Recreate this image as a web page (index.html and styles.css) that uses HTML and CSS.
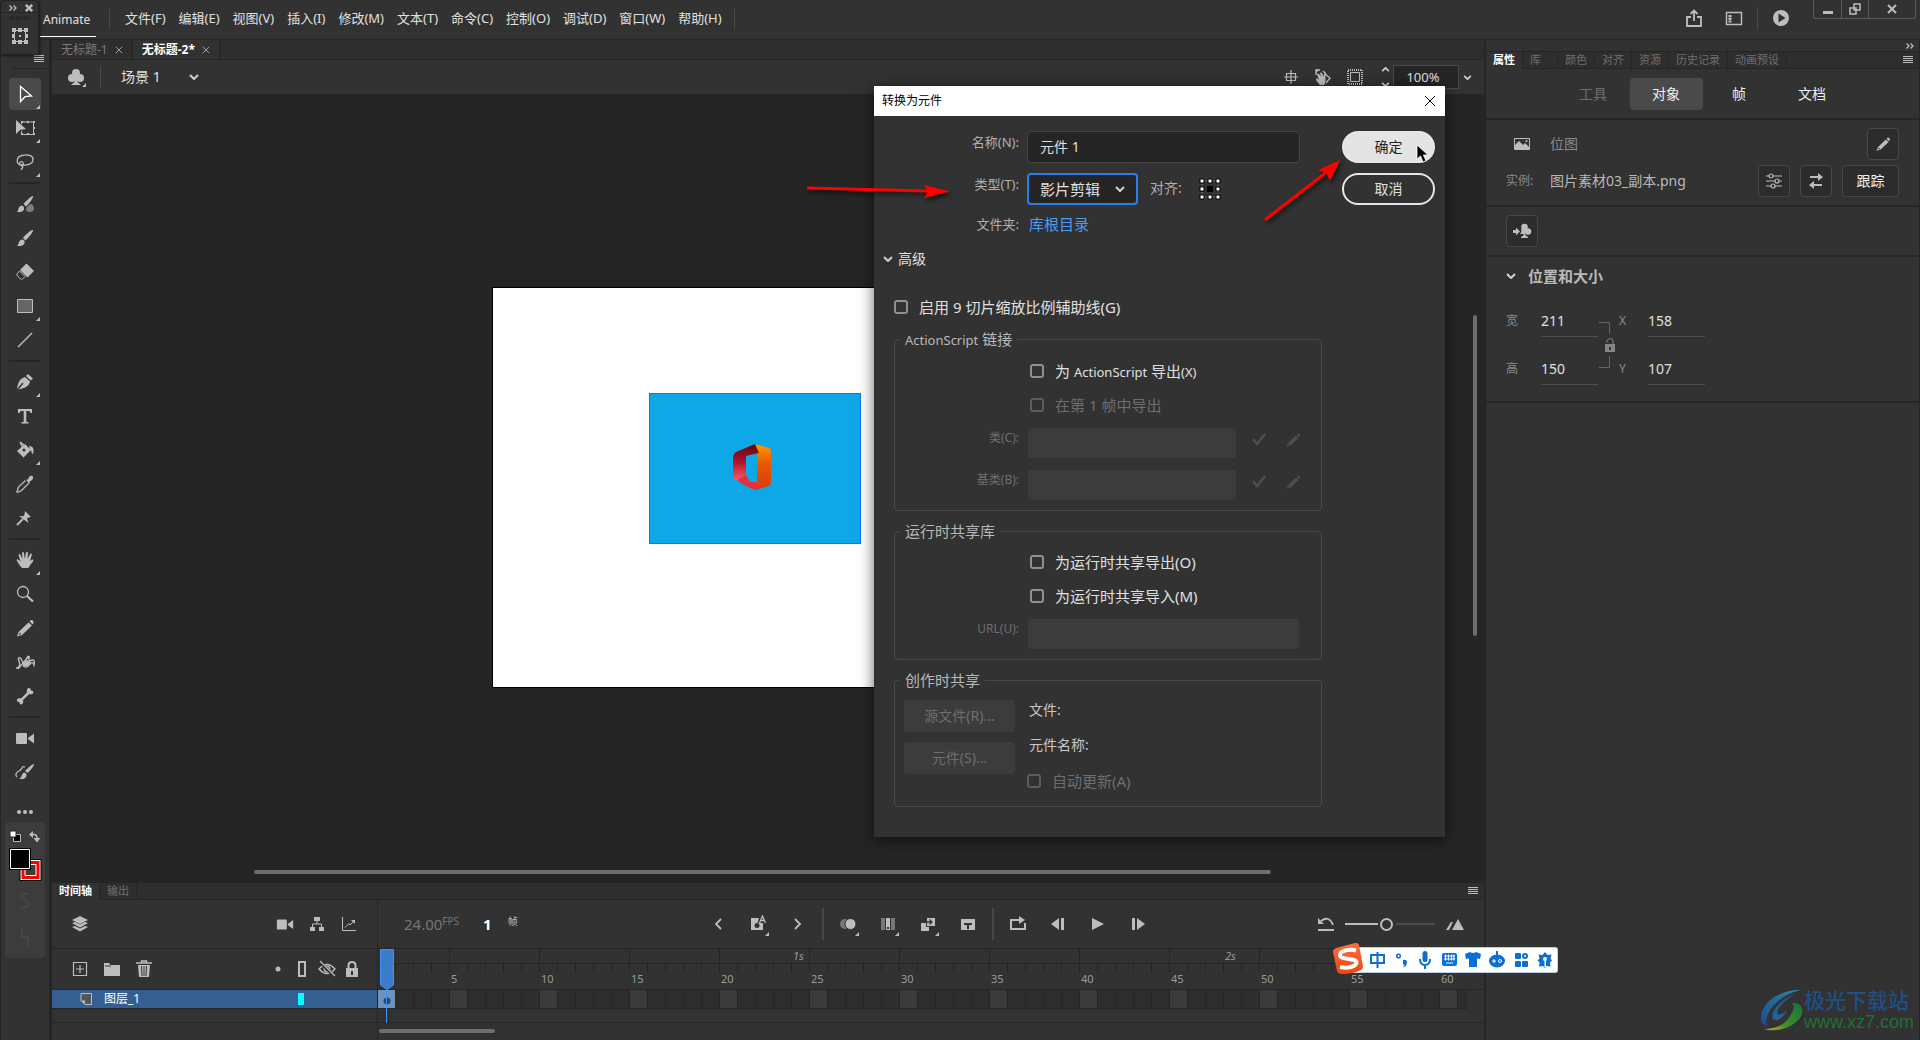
FILE: index.html
```html
<!DOCTYPE html>
<html lang="zh-CN">
<head>
<meta charset="utf-8">
<title>Animate</title>
<link rel="stylesheet" href="styles.css">
</head>
<body>
<svg class="sprite" aria-hidden="true">
  <symbol id="transform" viewBox="0 0 16 16"><path d="M2.500 2.500h11v11h-11z" fill="none" stroke="currentColor"/><path d="M0 0h4v4H0zM6 0h4v4H6zM12 0h4v4h-4zM0 6h3v4H0zM13 6h3v4h-3zM0 12h4v4H0zM6 12h4v4H6zM12 12h4v4h-4zM7 7h2v2H7z" fill="currentColor"/></symbol>
  <symbol id="more2" viewBox="0 0 8 6"><path d="M.5.500 3 3 .5 5.500M4.500.500 7 3 4.500 5.500" fill="none" stroke="currentColor" stroke-width="1.300"/></symbol>
  <symbol id="burger" viewBox="0 0 10 8"><path d="M0 .5h10M0 2.500h10M0 4.500h10M0 6.500h10" stroke="currentColor"/></symbol>
  <symbol id="x" viewBox="0 0 10 10"><path d="m1 1 8 8M9 1 1 9" stroke="currentColor" fill="none"/></symbol>
  <symbol id="down" viewBox="0 0 10 6"><path d="m1 1 4 4 4-4" fill="none" stroke="currentColor" stroke-width="2"/></symbol>
  <symbol id="club" viewBox="0 0 18 18"><circle cx="9" cy="5" r="4" fill="currentColor"/><circle cx="5" cy="10" r="4" fill="currentColor"/><circle cx="13" cy="10" r="4" fill="currentColor"/><path d="M8 7h2v5q.3 3 3.500 4v1h-9v-1Q7.700 15 8 12z" fill="currentColor"/></symbol>
  <symbol id="select" viewBox="0 0 20 20"><path d="M5.500 2.500v15l4.500-4.800 6.500-.7z" fill="none" stroke="#fff" stroke-width="1.300"/></symbol>
  <symbol id="subselect" viewBox="0 0 20 20"><path d="M1 2v14l4-4 6-1z" fill="currentColor"/><path d="M7 4h11.500v12.500H6.500V13M6.500 6V4" fill="none" stroke="currentColor"/><path d="M6 3h2v2H6zM12 3h2v2h-2zM18 3h2v2h-2zM18 9h2v2h-2zM18 15h2v2h-2zM12 15h2v2h-2zM6 15h2v2H6z" fill="currentColor"/></symbol>
  <symbol id="lasso" viewBox="0 0 20 20"><path d="M5 13C1 11 1 5 7 3.500c6-1.500 11 0 11 4 0 5-7 6.500-12 5.200M5.500 13.500a2 2 0 1 0-.1-3.500c-2 1-.5 4 1.600 3.500 2 1-.2 3-1 4.500" fill="none" stroke="currentColor" stroke-width="1.300"/></symbol>
  <symbol id="fluid" viewBox="0 0 20 20"><path d="M18 2c1 1-4 8-7 10.500L8.500 10C11 7 16 2 18 2zM2 18c1.500-1 1-5.500 4.500-6.500 2 .3 3 2 2.500 4-1 3-4.500 2.500-7 2.500z" fill="currentColor"/><path d="M15 10c2.500 0 4 2 4 4.500S17 18 14.500 18 11 16.500 11 15c0-2.500 3-3 4-5z" fill="currentColor" opacity=".55"/></symbol>
  <symbol id="brush" viewBox="0 0 20 20"><path d="M18 2c1 1-4.500 8-7.500 10.500L8 10C10.500 7 16 1.500 18 2zM2 18c2-1 1-5.500 5-6.500 2 .3 3.300 2 2.500 4-1.500 3-5 2.500-7.500 2.500z" fill="currentColor"/></symbol>
  <symbol id="eraser" viewBox="0 0 20 20"><path d="M11.500 1.500 19 9l-6.500 6.500L5 8z" fill="currentColor"/><path d="M4.500 9 2 12q-.5 1 .5 2l3 3q1 .8 2 0l2.500-2.500z" fill="none" stroke="currentColor"/></symbol>
  <symbol id="rect" viewBox="0 0 20 20"><path d="M2.500 3.500h15v13h-15z" fill="#666" stroke="currentColor"/></symbol>
  <symbol id="line" viewBox="0 0 20 20"><path d="M3 17 17 3" stroke="currentColor" stroke-width="1.400"/></symbol>
  <symbol id="pen" viewBox="0 0 20 20"><path d="m13 2 5 4.500-2.300 2L11 4zM10 5l5 4.500c-1 5-5 6.500-11.500 8l5-6-1-1-5.500 6.500C3 11 4.500 6.500 10 5z" fill="currentColor"/></symbol>
  <symbol id="type" viewBox="0 0 20 20"><path d="M3 3h14v4h-1.600q0-2-1.900-2h-2.200v11h2.200v1.500h-7V16h2.200V5H6.500Q4.600 5 4.600 7H3z" fill="currentColor"/></symbol>
  <symbol id="bucket" viewBox="0 0 20 20"><path d="m10 4 6 6-7.500 7.500L2 11zM14 6c5 0 5 4 4 8-2-.5-1-4-3-5z" fill="currentColor"/><path d="m5 2 4 8M5 2l4 3" stroke="currentColor" stroke-width="1.500"/><circle cx="9" cy="10" r="1.500" fill="#323232"/></symbol>
  <symbol id="dropper" viewBox="0 0 20 20"><path d="M11 5.500c1 0 1.500.3 2 0 .5-3.500 3-4.500 4.500-3.500 1.500 2 0 4.500-3 5.500.3 1 .5 1.500-.5 2.500z" fill="currentColor"/><path d="M10.500 6.500 3.500 13q-.8 2.500-1.500 5 2.500 0 4.500-1.500l7-7" fill="none" stroke="currentColor" stroke-width="1.300"/></symbol>
  <symbol id="pin" viewBox="0 0 20 20"><path d="m10 3 6 6q-3 0-4 1.500L13.500 15 4 8l4.500.2Q10 6 10 3z" fill="currentColor"/><path d="m2 17 6-6" stroke="currentColor" stroke-width="1.800"/></symbol>
  <symbol id="hand" viewBox="0 0 20 20"><path d="M7 18C5 16 2.500 12 1.500 10c0-1.500 1.500-1 4 1.500L3.500 5c0-1.300 1.500-1.500 2 0L7.500 9 7 3c.2-1.300 1.600-1.300 2 0l.8 6L11 2.500c.5-1.200 1.900-.8 2 .5L12.500 9l2.600-5c.8-1 2-.3 1.700 1L15 11c1.500-1.500 3-2 3.500-1-1 3-3 4-4 6-.5 1.500-1 2-2 2z" fill="currentColor"/></symbol>
  <symbol id="zoom" viewBox="0 0 20 20"><circle cx="8" cy="8" r="5.500" fill="none" stroke="currentColor" stroke-width="1.300"/><path d="m12 12 6 5.500" stroke="currentColor" stroke-width="2.200"/></symbol>
  <symbol id="pencil" viewBox="0 0 20 20"><path d="m13.500 4.500 3.500 3L7 17l-5 1.500L3.500 14zM14.500 3.300 16 2q3 .3 2.500 3l-1 1.500z" fill="currentColor"/><path d="M5 14.500 3.500 17l2.700-1z" fill="#323232"/></symbol>
  <symbol id="warp" viewBox="0 0 20 20"><path d="M1 16C5 16 5 12 4 9 2 4 6 5 7 9c1 2 3 2 4-1 1-4 3-4 3 0 0 2 2 0 3.500 0 2.500 0 2 3 1.500 5-1-3-2.500-3-4-1-2 3-4 4-7 2M3 17l10-12" fill="none" stroke="currentColor" stroke-width="1.400"/><path d="M7 10q3 2 5-2l4 2q-2 5-8 4z" fill="currentColor"/><circle cx="13.500" cy="5" r="1.500" fill="currentColor"/></symbol>
  <symbol id="bone" viewBox="0 0 20 20"><path d="M14 2q2 0 2 2.500 2.500 0 2.500 2c-1 2.500-3 1.800-4.200 1.500L8 14c.4 2 .2 4-1.500 4.500-2 0-2-1-2-2.500-2.500 0-2.800-1.500-2.500-2.300 1-2 2.800-1.500 4-1.200l6-6C11.500 4.500 12 2 14 2z" fill="currentColor"/></symbol>
  <symbol id="camera" viewBox="0 0 20 20"><rect x="1" y="5" width="11" height="11" rx="1" fill="currentColor"/><path d="m13 10 6-4.500v10L13 11z" fill="currentColor"/></symbol>
  <symbol id="assetbrush" viewBox="0 0 20 20"><path d="M19 2c.5 1.500-4 7-6.500 9L10 9c3-3 7-7 9-7zM4 17c3-1 2-5 5-6.500 2 .3 3 1.800 2.500 3.500-1.500 4-5 3-7.500 3z" fill="currentColor"/><path d="M10 5C7 3 7 8 4 9s-4 4-2 6" fill="none" stroke="currentColor" stroke-width="1.300"/></symbol>
  <symbol id="dots" viewBox="0 0 20 20"><circle cx="4" cy="10" r="2" fill="currentColor"/><circle cx="10" cy="10" r="2" fill="currentColor"/><circle cx="16" cy="10" r="2" fill="currentColor"/></symbol>
  <symbol id="layers" viewBox="0 0 18 18"><path d="m9 1 8 4-8 4-8-4zM1 8l3-1 5 2.500L14 7l3 1-8 4.500zM1 12l3-1 5 2.500 5-2.500 3 1-8 4.500z" fill="currentColor"/></symbol>
  <symbol id="tree" viewBox="0 0 16 16"><path d="M5 1h6v4H5zM1 11h5v4H1zM10 11h5v4h-5z" fill="currentColor"/><path d="M8 5v3M3.500 11V8h9v3" fill="none" stroke="currentColor"/></symbol>
  <symbol id="graph" viewBox="0 0 16 16"><path d="M1.500 1v13.500H15M4 11.500l4-4L9 9l4-4" fill="none" stroke="currentColor"/><path d="M10 4h4v4z" fill="currentColor"/></symbol>
  <symbol id="share" viewBox="0 0 18 18"><path d="M6 8H2v9h14V8h-4M9 12V2M5.500 5 9 1.500 12.500 5" fill="none" stroke="currentColor" stroke-width="1.800"/></symbol>
  <symbol id="layout" viewBox="0 0 18 18"><path d="M1.500 3.500h15v12h-15z" fill="none" stroke="currentColor" stroke-width="1.400"/><path d="M3.500 6h3v2.200h-3zM3.500 8.800h3V11h-3zM3.500 11.600h3v2h-3z" fill="currentColor"/></symbol>
  <symbol id="playround" viewBox="0 0 18 18"><circle cx="9" cy="9" r="8" fill="currentColor"/><path d="m6.500 4.500 7 4.500-7 4.500z" fill="#323232"/></symbol>
  <symbol id="cross" viewBox="0 0 16 16"><path d="M8 1v14M1 8h14M3.500 4.500h9v7h-9z" fill="none" stroke="currentColor" stroke-width="1.200"/></symbol>
  <symbol id="clip" viewBox="0 0 16 16"><path d="M1 1h14v14H1z" fill="none" stroke="currentColor" stroke-width="2" stroke-dasharray="1 1"/><path d="M3.500 3.500h9v9h-9z" fill="none" stroke="currentColor"/></symbol>
  <symbol id="rotate" viewBox="0 0 18 18"><path d="M6 17c-2-2-4-4-4-6 1-1 2 0 3 1L3 6q1-1 2 0l2 3-1-4q1-1 2 0l1.500 4L10 6q1-1 1.500.5L11.500 12c0 3-1 5-2 5z" fill="currentColor"/><path d="M2 7V2h4M4 2l-2 2M11 6l5 4-4 5M9 3l3 3" fill="none" stroke="currentColor" stroke-width="1.400"/></symbol>
  <symbol id="image" viewBox="0 0 16 12"><path d="M.5.500h15v11H.5z" fill="none" stroke="currentColor"/><path d="M1 11V7l4-4 4 4 2-2 4 4v2z" fill="currentColor"/><circle cx="12.500" cy="3" r="1" fill="currentColor"/></symbol>
  <symbol id="sliders" viewBox="0 0 16 16"><path d="M0 3h3m4 0h9M0 8h9m4 0h3M0 13h5m4 0h7" stroke="currentColor"/><g fill="none" stroke="currentColor" stroke-width="1.200"><circle cx="5" cy="3" r="2"/><circle cx="11" cy="8" r="2"/><circle cx="7" cy="13" r="2"/></g></symbol>
  <symbol id="swap" viewBox="0 0 16 16"><path d="M2 4h9M5 12h9" stroke="currentColor" stroke-width="2"/><path d="m10 0 5 4-5 4zM6 8l-5 4 5 4z" fill="currentColor"/></symbol>
  <symbol id="toclub" viewBox="0 0 20 18"><circle cx="12.500" cy="5" r="3.300" fill="currentColor"/><circle cx="16" cy="9.500" r="3.300" fill="currentColor"/><path d="M12 5h1v7q.5 2 3 3v1H9v-1q2.500-1 3-3zM9 7l4 1-1 4H8l1.500-2.500zM1 8h3V5.500L8 9.500l-4 4V11H1z" fill="currentColor"/></symbol>
  <symbol id="lock" viewBox="0 0 16 18"><path d="M4.500 8V5.500q0-3.500 3.500-3.500t3.500 3.500V8" fill="none" stroke="currentColor" stroke-width="2"/><path d="M2 8h12v9H2z" fill="currentColor"/><path d="M7 11h2v4H7z" fill="#323232"/></symbol>
  <symbol id="unlock" viewBox="0 0 10 14"><path d="M2 4.500V3q1-2.500 3.500-2.500T8 3v3" fill="none" stroke="currentColor"/><path d="M0 6h10v8H0z" fill="currentColor"/><path d="M4 9h2v3H4z" fill="#323232"/></symbol>
  <symbol id="plus" viewBox="0 0 16 16"><path d="M1.500 1.500h13v13h-13zM8 4v8M4 8h8" fill="none" stroke="currentColor" stroke-width="1.200"/></symbol>
  <symbol id="folder" viewBox="0 0 16 16"><path d="M0 2h5l1.500 2H16v11H0z" fill="currentColor"/><path d="M1 5h6" stroke="#323232"/></symbol>
  <symbol id="trash" viewBox="0 0 16 18"><path d="M0 3h16M5.500 3V1h5v2" fill="none" stroke="currentColor" stroke-width="1.500"/><path d="M2 5h12l-1 12H3z" fill="currentColor"/><path d="m5.500 6 .5 10M8 6v10m2.500-10-.5 10" stroke="#323232"/></symbol>
  <symbol id="eye" viewBox="0 0 18 18"><path d="M1 9q8-9 16 0-8 9-16 0z" fill="none" stroke="currentColor" stroke-width="1.300"/><circle cx="9" cy="9" r="2.800" fill="none" stroke="currentColor" stroke-width="1.300"/><path d="m2 2 14 14" stroke="#323232" stroke-width="3"/><path d="m2 1 15 15" stroke="currentColor" stroke-width="1.300"/></symbol>
  <symbol id="bar" viewBox="0 0 16 18"><path d="M5 2h6v14H5z" fill="none" stroke="currentColor" stroke-width="2"/></symbol>
  <symbol id="dot" viewBox="0 0 16 16"><circle cx="8" cy="8" r="2.500" fill="currentColor"/></symbol>
  <symbol id="page" viewBox="0 0 12 12"><path d="M1 .5h10.500v11H5L1 7.500z" fill="#555" stroke="currentColor"/><path d="M1 7.500h4v4z" fill="currentColor"/></symbol>
  <symbol id="prevkf" viewBox="0 0 18 18"><path d="m12 4-5 5 5 5" fill="none" stroke="currentColor" stroke-width="1.800"/></symbol>
  <symbol id="nextkf" viewBox="0 0 18 18"><path d="m6 4 5 5-5 5" fill="none" stroke="currentColor" stroke-width="1.800"/></symbol>
  <symbol id="autokf" viewBox="0 0 18 18"><path d="M2 3h8L8.500 8H14v7H2z" fill="currentColor"/><circle cx="8" cy="10.500" r="2.500" fill="#323232"/><path d="m10.500 8 3-7 3 7m-5-2.500h4" fill="none" stroke="currentColor" stroke-width="1.300"/></symbol>
  <symbol id="onion" viewBox="0 0 18 18"><circle cx="6" cy="9" r="5" fill="#777"/><circle cx="11.500" cy="9" r="5.500" fill="currentColor" stroke="#323232"/></symbol>
  <symbol id="multi" viewBox="0 0 18 18"><path d="M2 3h4v12H2zM12 3h4v12h-4z" fill="#777"/><path d="M7 3h4v12H7z" fill="currentColor"/><path d="M8 12h2v2H8z" fill="#323232"/></symbol>
  <symbol id="tween" viewBox="0 0 18 18"><path d="M2 8h8v8H2z" fill="currentColor"/><path d="M7.500 2.500h9v9h-9z" fill="currentColor" stroke="#323232"/><path d="M7 7h6m-2.500-2.500L13 7l-2.500 2.500" fill="none" stroke="#323232" stroke-width="1.300"/></symbol>
  <symbol id="slot" viewBox="0 0 18 18"><path d="M2 4h14v11H2z" fill="currentColor"/><path d="M5 8h8v2h-3v4H8v-4H5z" fill="#323232"/></symbol>
  <symbol id="loop" viewBox="0 0 18 18"><path d="M5 5H2v9h14V8M5 5h6" fill="none" stroke="currentColor" stroke-width="2"/><path d="m10 1 6 4-6 4z" fill="currentColor"/></symbol>
  <symbol id="stepback" viewBox="0 0 18 18"><path d="M10 3v12L2 9zM12 3h3v12h-3z" fill="currentColor"/></symbol>
  <symbol id="play" viewBox="0 0 18 18"><path d="M3 3v12l12-6z" fill="currentColor"/></symbol>
  <symbol id="stepfwd" viewBox="0 0 18 18"><path d="M8 3v12l8-6zM3 3h3v12H3z" fill="currentColor"/></symbol>
  <symbol id="reset" viewBox="0 0 18 18"><path d="M1 3v6h6zM1 14h16v2H1z" fill="currentColor"/><path d="M4 6q8-6 12 4" fill="none" stroke="currentColor" stroke-width="1.800"/></symbol>
  <symbol id="mounts" viewBox="0 0 20 16"><path d="m7 14 6-11 6 11zM1 14 6 6h2L4 14z" fill="currentColor"/></symbol>
  <symbol id="check" viewBox="0 0 14 14"><path d="m1 7 4 5 8-10" fill="none" stroke="currentColor" stroke-width="2.500"/></symbol>
</svg>

<div class="app">
  <header class="topbar">
    <a class="home" href="#">Animate</a>
    <nav class="menus">
      <a href="#">文件(F)</a><a href="#">编辑(E)</a><a href="#">视图(V)</a><a href="#">插入(I)</a><a href="#">修改(M)</a><a href="#">文本(T)</a><a href="#">命令(C)</a><a href="#">控制(O)</a><a href="#">调试(D)</a><a href="#">窗口(W)</a><a href="#">帮助(H)</a>
    </nav>
    <div class="top-actions">
      <button class="sharebtn" aria-label="共享"><svg class="i18"><use href="#share"/></svg></button>
      <button aria-label="工作区"><svg class="i18"><use href="#layout"/></svg></button>
      <span class="vline"></span>
      <button aria-label="测试影片"><svg class="i18"><use href="#playround"/></svg></button>
    </div>
    <div class="winctl">
      <button aria-label="最小化"><svg width="12" height="12"><path d="M1 8h10v3H1z" fill="currentColor"/></svg></button>
      <button aria-label="还原"><svg width="12" height="12"><path d="M5 1h6v6H5z M1 5h6v6H1z" fill="#323232" stroke="currentColor" stroke-width="1.500"/></svg></button>
      <button class="wide" aria-label="关闭"><svg width="12" height="12"><path d="m2 2 8 8M10 2l-8 8" stroke="currentColor" stroke-width="2"/></svg></button>
    </div>
  </header>

  <aside class="tools">
    <div class="tools-head"><svg class="burger"><use href="#burger"/></svg></div>
    <div class="tool-list">
      <button class="tool active more" aria-label="选择"><svg><use href="#select"/></svg></button>
      <button class="tool more" aria-label="部分选取"><svg><use href="#subselect"/></svg></button>
      <button class="tool more" aria-label="套索"><svg><use href="#lasso"/></svg></button>
      <hr>
      <button class="tool" aria-label="流畅画笔"><svg><use href="#fluid"/></svg></button>
      <button class="tool" aria-label="画笔"><svg><use href="#brush"/></svg></button>
      <button class="tool" aria-label="橡皮擦"><svg><use href="#eraser"/></svg></button>
      <button class="tool more" aria-label="矩形"><svg><use href="#rect"/></svg></button>
      <button class="tool" aria-label="线条"><svg><use href="#line"/></svg></button>
      <hr>
      <button class="tool more" aria-label="钢笔"><svg><use href="#pen"/></svg></button>
      <button class="tool" aria-label="文本"><svg><use href="#type"/></svg></button>
      <button class="tool more" aria-label="颜料桶"><svg><use href="#bucket"/></svg></button>
      <button class="tool" aria-label="滴管"><svg><use href="#dropper"/></svg></button>
      <button class="tool" aria-label="资源变形"><svg><use href="#pin"/></svg></button>
      <hr>
      <button class="tool more" aria-label="手形"><svg><use href="#hand"/></svg></button>
      <button class="tool" aria-label="缩放"><svg><use href="#zoom"/></svg></button>
      <button class="tool" aria-label="铅笔"><svg><use href="#pencil"/></svg></button>
      <button class="tool" aria-label="宽度"><svg><use href="#warp"/></svg></button>
      <button class="tool" aria-label="骨骼"><svg><use href="#bone"/></svg></button>
      <hr>
      <button class="tool" aria-label="摄像头"><svg><use href="#camera"/></svg></button>
      <button class="tool" aria-label="传统画笔"><svg><use href="#assetbrush"/></svg></button>
      <button class="tool dots" aria-label="编辑工具栏"><svg><use href="#dots"/></svg></button>
    </div>
    <div class="swatches">
      <svg width="40" height="136" viewBox="0 0 40 136">
        <path d="M8.500 12.500h7v7h-7z" fill="#000" stroke="#bbb"/><path d="M5 9h6v6H5z" fill="#fff" stroke="#222"/>
        <path d="M15 37.500h21v21H15z" fill="#fff" stroke="#000"/><path d="M19 41.500h13v13H19z" fill="#3c3c3c" stroke="#f00" stroke-width="5"/><path d="M20 42.500h11v11H20z" fill="#3c3c3c" stroke="#fff"/>
        <path d="M4.500 26.500h21v21h-21z" fill="#000" stroke="#000"/><path d="M5.500 27.500h19v19h-19z" fill="#000" stroke="#fff"/>
        <path d="M24 72c-8-2-10 4-4 6s5 9-4 7M17 106v9h6v11" fill="none" stroke="#505050"/>
        <path d="M27 12.500h2q3 0 3 4" fill="none" stroke="#bdbdbd" stroke-width="1.500"/><path d="M28 9v7l-4-3.500zM28.500 16h7L32 20.500z" fill="#bdbdbd"/>
      </svg>
    </div>
  </aside>

  <main class="work">
    <div class="doctabs">
      <a class="doctab" href="#">无标题-1 <svg class="i8"><use href="#x"/></svg></a>
      <a class="doctab on" href="#">无标题-2* <svg class="i8"><use href="#x"/></svg></a>
    </div>
    <div class="editbar">
      <button class="clubbtn more" aria-label="编辑元件"><svg class="i18"><use href="#club"/></svg></button>
      <span class="vline"></span>
      <button class="scene">场景 1 <svg class="chev"><use href="#down"/></svg></button>
      <div class="viewctl">
        <button aria-label="舞台居中"><svg><use href="#cross"/></svg></button>
        <button aria-label="旋转"><svg class="i18"><use href="#rotate"/></svg></button>
        <button aria-label="剪切"><svg><use href="#clip"/></svg></button>
        <span class="stepper"><svg class="chev thin up"><use href="#down"/></svg><svg class="chev thin"><use href="#down"/></svg></span>
        <input class="zoomval" aria-label="缩放比例" value="100%">
        <button class="zoomdrop" aria-label="缩放选项"><svg class="chev thin"><use href="#down"/></svg></button>
      </div>
    </div>
    <div class="canvas">
      <div class="stage">
        <div class="bitmap">
          <svg width="38" height="46" viewBox="0 0 38 46">
            <defs>
              <linearGradient id="o1" x1="0" y1="0" x2="0" y2="1"><stop offset="0" stop-color="#ff9d00"/><stop offset=".4" stop-color="#ea5a00"/><stop offset="1" stop-color="#d83b10"/></linearGradient>
              <linearGradient id="o2" x1="0" y1="0" x2="0" y2="1"><stop offset="0" stop-color="#5a0a10"/><stop offset=".5" stop-color="#b31030"/><stop offset="1" stop-color="#ff5a60"/></linearGradient>
            </defs>
            <path d="M22 0 36 4q2 1 2 3v32q0 2-2 3l-13 4-12-7 13-1V9z" fill="url(#o1)"/>
            <path d="M22 0l4 9-13 3v19l-9 5q-4 0-4-3V13q0-3 3-5z" fill="url(#o2)"/>
            <path d="m4 36 9-5 4 7h8v6l-2 2q-5-1-12-5z" fill="#e8303c"/>
          </svg>
        </div>
      </div>
      <i class="scroll-v"></i><i class="scroll-h"></i>
    </div>

    <section class="timeline">
      <div class="tl-tabs">
        <a class="ptab on" href="#">时间轴</a><a class="ptab" href="#">输出</a>
        <svg class="burger"><use href="#burger"/></svg>
      </div>
      <div class="tl-body">
        <div class="tl-left">
          <div class="tl-tools">
            <button aria-label="图层深度"><svg class="i18"><use href="#layers"/></svg></button>
            <span class="grow"></span>
            <button aria-label="添加摄像头"><svg class="i18"><use href="#camera"/></svg></button>
            <button aria-label="父级视图"><svg><use href="#tree"/></svg></button>
            <button aria-label="图层图"><svg><use href="#graph"/></svg></button>
          </div>
          <div class="layer-head">
            <button aria-label="新建图层"><svg><use href="#plus"/></svg></button>
            <button aria-label="新建文件夹"><svg><use href="#folder"/></svg></button>
            <button aria-label="删除"><svg class="i18"><use href="#trash"/></svg></button>
            <span class="grow"></span>
            <span class="flags"><svg><use href="#dot"/></svg><svg class="i18"><use href="#bar"/></svg><svg class="i18"><use href="#eye"/></svg><svg class="i18"><use href="#lock"/></svg></span>
          </div>
          <div class="layer"><svg class="i12"><use href="#page"/></svg><span>图层_1</span><i class="outline"></i></div>
          <div class="blank"></div>
        </div>
        <div class="tl-right">
          <div class="tl-tools">
            <div class="fps"><span class="rate">24.00</span><sup>FPS</sup><b>1</b><sup class="unit">帧</sup></div>
            <button aria-label="上一关键帧"><svg class="i18"><use href="#prevkf"/></svg></button>
            <button class="more" aria-label="自动关键帧"><svg class="i18"><use href="#autokf"/></svg></button>
            <button aria-label="下一关键帧"><svg class="i18"><use href="#nextkf"/></svg></button>
            <span class="bar2"></span>
            <button class="more" aria-label="绘图纸外观"><svg class="i18"><use href="#onion"/></svg></button>
            <button class="more" aria-label="编辑多个帧"><svg class="i18"><use href="#multi"/></svg></button>
            <button class="more" aria-label="创建补间"><svg class="i18"><use href="#tween"/></svg></button>
            <button aria-label="插入帧"><svg class="i18"><use href="#slot"/></svg></button>
            <span class="bar2"></span>
            <button aria-label="循环"><svg class="i18"><use href="#loop"/></svg></button>
            <button aria-label="后退一帧"><svg class="i18"><use href="#stepback"/></svg></button>
            <button aria-label="播放"><svg class="i18"><use href="#play"/></svg></button>
            <button aria-label="前进一帧"><svg class="i18"><use href="#stepfwd"/></svg></button>
            <div class="tlzoom">
              <svg class="i18"><use href="#reset"/></svg>
              <input type="range" aria-label="时间轴缩放" min="0" max="100" value="46">
              <svg class="i20"><use href="#mounts"/></svg>
            </div>
          </div>
          <div class="ruler">
            <div class="seconds"><i>1s</i><i>2s</i></div>
            <div class="nums"><span>5</span><span>10</span><span>15</span><span>20</span><span>25</span><span>30</span><span>35</span><span>40</span><span>45</span><span>50</span><span>55</span><span>60</span></div>
          </div>
          <div class="frames"><i class="key"></i></div>
          <div class="blank"></div>
          <div class="hbar"></div>
          <svg class="playhead" width="14" height="74" viewBox="0 0 14 74"><path d="M.5.500h13V36L7 40.500.5 36z" fill="#3a7cc8" stroke="#3f92f5"/><path d="M6.500 40v34" stroke="#3f92f5"/></svg>
        </div>
      </div>
    </section>
  </main>

  <aside class="props">
    <div class="collapse"><svg class="i8"><use href="#more2"/></svg></div>
    <div class="tl-tabs">
      <a class="ptab on" href="#">属性</a><a class="ptab lib" href="#">库</a><a class="ptab" href="#">颜色</a><a class="ptab" href="#">对齐</a><a class="ptab" href="#">资源</a><a class="ptab" href="#">历史记录</a><a class="ptab" href="#">动画预设</a>
      <svg class="burger"><use href="#burger"/></svg>
    </div>
    <div class="modes">
      <button disabled>工具</button><button class="on">对象</button><button>帧</button><button>文档</button>
    </div>
    <div class="inst">
      <div class="inst-row"><svg class="pic"><use href="#image"/></svg><span class="kind">位图</span><button class="box" aria-label="编辑"><svg><use href="#pencil"/></svg></button></div>
      <div class="inst-row"><span class="lbl">实例:</span><span class="name">图片素材03_副本.png</span><button class="box" aria-label="设置"><svg><use href="#sliders"/></svg></button><button class="box" aria-label="交换"><svg><use href="#swap"/></svg></button><button class="box text">跟踪</button></div>
    </div>
    <div class="conv"><button class="box" aria-label="转换为元件"><svg class="i20"><use href="#toclub"/></svg></button></div>
    <div class="size">
      <h2><svg class="chev"><use href="#down"/></svg>位置和大小</h2>
      <div class="dims">
        <label for="w">宽</label><input id="w" value="211"><span class="link"><svg width="11" height="46" viewBox="0 0 11 46" fill="none" stroke="#666"><path d="M0 .5h10.500V12M10.500 34v11.500H0"/></svg><svg class="ul"><use href="#unlock"/></svg></span><label for="px">X</label><input id="px" value="158">
        <label for="h">高</label><input id="h" value="150"><label for="py">Y</label><input id="py" value="107">
      </div>
    </div>
  </aside>
</div>

<div class="floatbar">
  <div class="fhead"><svg class="i8"><use href="#more2"/></svg><svg class="i8 thick"><use href="#x"/></svg></div>
  <div class="grip"></div>
  <svg><use href="#transform"/></svg>
</div>

<div class="dialog" role="dialog" aria-labelledby="dt">
  <div class="dtitle"><span id="dt">转换为元件</span><button aria-label="关闭"><svg width="12" height="12"><path d="m1 1 10 10M11 1 1 11" stroke="#000"/></svg></button></div>
  <form class="dbody">
    <div class="form-top">
      <div class="rows">
        <div class="row"><label for="nm">名称(N):</label><input id="nm" class="tx" value="元件 1"></div>
        <div class="row"><label for="ty">类型(T):</label><span class="sel"><select id="ty"><option>影片剪辑</option></select><svg class="chev"><use href="#down"/></svg></span><span class="al">对齐:</span>
          <svg class="reg" viewBox="0 0 22 22"><path d="M3 3h16v16H3z" fill="none" stroke="#999" stroke-dasharray="1 1"/><g fill="#fff" stroke="#000"><path d="M1 1h4v4H1zM9 1h4v4H9zM17 1h4v4h-4zM1 9h4v4H1zM17 9h4v4h-4zM1 17h4v4H1zM9 17h4v4H9zM17 17h4v4h-4z"/></g><path d="M8 8h6v6H8z"/></svg></div>
        <div class="row short"><label>文件夹:</label><a class="root" href="#">库根目录</a></div>
      </div>
      <div class="dbtns"><button type="button" class="ok">确定</button><button type="button" class="cancel">取消</button></div>
    </div>
    <div class="adv"><svg class="chev"><use href="#down"/></svg>高级</div>
    <label class="ck nine"><input type="checkbox">启用 9 切片缩放比例辅助线(G)</label>
    <fieldset>
      <legend><span class="latin">ActionScript</span> 链接</legend>
      <label class="ck"><input type="checkbox"><span>为 <span class="latin">ActionScript</span> 导出<span class="latin">(X)</span></span></label>
      <label class="ck off"><input type="checkbox" disabled>在第 1 帧中导出</label>
      <div class="fr"><label for="cl">类(C):</label><input id="cl" class="dis" disabled><svg class="i14"><use href="#check"/></svg><svg><use href="#pencil"/></svg></div>
      <div class="fr"><label for="bc">基类(B):</label><input id="bc" class="dis" disabled><svg class="i14"><use href="#check"/></svg><svg><use href="#pencil"/></svg></div>
    </fieldset>
    <fieldset>
      <legend>运行时共享库</legend>
      <label class="ck"><input type="checkbox">为运行时共享导出(O)</label>
      <label class="ck"><input type="checkbox">为运行时共享导入(M)</label>
      <div class="fr"><label for="url">URL(U):</label><input id="url" class="dis long" disabled></div>
    </fieldset>
    <fieldset class="author">
      <legend>创作时共享</legend>
      <div class="auth">
        <div class="col"><button type="button" disabled>源文件(R)...</button><button type="button" disabled>元件(S)...</button></div>
        <div class="info"><span>文件:</span><span>元件名称:</span><label class="ck off"><input type="checkbox" disabled>自动更新(A)</label></div>
      </div>
    </fieldset>
  </form>
</div>

<svg class="arrow a1" width="144" height="20" viewBox="0 0 144 20"><path d="m1 6 120 3" stroke="red" stroke-width="3" stroke-linecap="round"/><path d="m117 3 26 6.500L117 16l4-6.500z" fill="red"/></svg>
<svg class="arrow a2" width="78" height="64" viewBox="0 0 78 64"><path d="M2 61 64 13" stroke="red" stroke-width="3" stroke-linecap="round"/><path d="M76 2 66 23l-4-8-8-3z" fill="red"/></svg>
<svg class="cursor" width="14" height="20" viewBox="0 0 14 20"><path d="M1 1v14l3.500-3 2.500 6 3-1.300-2.600-5.700H12z" fill="#000" stroke="#fff" stroke-width=".8"/></svg>

<div class="ime">
  <svg width="228" height="32" viewBox="0 0 228 32">
    <defs><linearGradient id="sg" x1="0" y1="0" x2="0" y2="1"><stop offset="0" stop-color="#f87040"/><stop offset="1" stop-color="#f04510"/></linearGradient></defs>
    <rect x="18.500" y="4.500" width="207" height="25" rx="2" fill="#fff" stroke="#b9cfe8"/>
    <path d="m4 5 19-5q3-.5 4 2l4 21q0 3-2 4-8 4-19 4-4 0-5-3L1 9Q1 6 4 5z" fill="url(#sg)"/>
    <path d="M24 7.500C16 5.500 7.500 8 8 12.500s16 2.500 16.500 6.500-8 7-16.500 5" fill="none" stroke="#fff" stroke-width="4"/>
    <g fill="none" stroke="#0b6fd8" stroke-width="2">
      <path d="M39 12h13v8H39zM45.500 9v16"/><circle cx="66.500" cy="13" r="1.800" stroke-width="1.500"/>
      <path d="M88 16q0 6 5 6t5-6M93 22v4"/>
    </g>
    <g fill="#0b6fd8">
      <path d="M71 17q4-1 4 2.500-.5 4-4 5 2-2.500 0-3.500z"/><rect x="90.500" y="8" width="5" height="11" rx="2.500"/><rect x="110" y="10" width="15" height="13" rx="2"/>
      <path d="m133 11 5-2q3 2 6 0l5 2-1 5-3-.5V24h-8v-8.500l-3 .5z"/>
      <ellipse cx="165" cy="18" rx="8" ry="6.500"/><path d="M164 8h2v5h-2z"/>
      <rect x="183" y="10" width="6" height="6" rx="1"/><rect x="190" y="10" width="6" height="6" rx="3"/><rect x="183" y="18" width="6" height="6" rx="1"/><rect x="190" y="18" width="6" height="6" rx="1"/>
      <path d="m213 9 2.500 3 4-.5-1 4 1.500 2-2 2 .5 4-4-.5L213 25l-2-2-4 .5.500-4-2-2 2-2-1-4 4 .5z"/>
    </g>
    <path d="M112 13h11M112 16h11M114 20h7M113.500 11.500v6M116.500 11.500v6M119.500 11.500v6M122 11.500v6M160 18h4M162 16v4" stroke="#fff" fill="none"/>
    <circle cx="168" cy="18" r="1.500" fill="none" stroke="#fff"/><circle cx="193" cy="13" r="1" fill="#fff"/><circle cx="213" cy="16" r="2" fill="#fff"/><path d="M212.500 16h1.500v8h-1.500z" fill="#fff"/>
  </svg>
</div>

<div class="mark">
  <svg width="44" height="44" viewBox="0 0 44 44">
    <defs><linearGradient id="b" x1="1" y1="0" x2="0" y2="1"><stop offset="0" stop-color="#2b87a4"/><stop offset="1" stop-color="#1d4c91"/></linearGradient><linearGradient id="g" x1="1" y1="0" x2="0" y2="1"><stop offset="0" stop-color="#17733a"/><stop offset=".6" stop-color="#3f8a2c"/><stop offset="1" stop-color="#b5ae22"/></linearGradient></defs>
    <path d="M41 2C20 1 0 15 1 31c0 4 3 6 6 7C3 28 15 8 41 2z" fill="url(#b)"/>
    <path d="M37 5C22 10 9 24 13 31c4 3 9 0 14-8-5 3-9 5-10 2 0-5 8-14 20-20z" fill="#226099"/>
    <path d="M32 15c10-1 13 7 8 15C33 39 18 45 4 41c12 0 22-5 26-13 2-4 6-8 2-13z" fill="url(#g)"/>
  </svg>
  <div><div class="m1">极光下载站</div><div class="m2">www.xz7.com</div></div>
</div>
</body>
</html>
```
FILE: styles.css
```css
* { box-sizing: border-box; }
html { height: 100%; }
body {
  margin: 0;
  min-height: 100%;
  background: #252525;
  color: #e0e0e0;
  font: 13px/20px "Noto Sans", "Noto Sans CJK SC", sans-serif;
  overflow: hidden;
}
button, input, select { font: inherit; color: inherit; margin: 0; padding: 0; border: 0; background: none; }
button { display: inline-flex; align-items: center; justify-content: center; }
a { color: inherit; text-decoration: none; }
svg { display: block; color: #bdbdbd; flex: none; }
svg:not([width]) { width: 16px; height: 16px; }
svg.sprite { position: absolute; width: 0; height: 0; }
svg.i8 { width: 8px; height: 8px; }
svg.i12 { width: 12px; height: 12px; }
svg.i14 { width: 14px; height: 14px; }
svg.i18 { width: 18px; height: 18px; }
svg.i20 { width: 20px; height: 20px; }
svg.chev { width: 10px; height: 6px; color: #d0d0d0; }
svg.burger { width: 10px; height: 8px; }
.grow { flex: 1; }
.more { position: relative; }
.more::after {
  content: "";
  position: absolute;
  right: 5px;
  bottom: 3px;
  border: 2px solid;
  border-color: transparent #bdbdbd #bdbdbd transparent;
}

.app {
  display: grid;
  grid-template: 40px 1fr / 49px minmax(0, 1fr) 434px;
  column-gap: 2px;
  height: 100vh;
}

/* top bar */
.topbar { grid-column: 1 / -1; display: flex; background: #323232; border-bottom: 1px solid #252525; }
.home { margin-left: 40px; width: 56px; padding: 10px 3px 0; height: 37px; border-bottom: 1px solid #fff; font-size: 12px; }
.menus { display: flex; gap: 13px; height: 20px; margin: 9px 0 0 13px; padding: 0 12px 0 15px; border: solid #4a4a4a; border-width: 0 1px; line-height: 18px; }
.top-actions { display: flex; align-items: center; gap: 14px; height: 36px; margin-left: auto; padding-right: 23px; }
.sharebtn { margin-right: 8px; }
.vline { width: 1px; height: 23px; background: #4a4a4a; }
.winctl { display: flex; height: 19px; margin-right: 4px; border: 1px solid #5a5a5a; border-top: 0; border-radius: 0 0 3px 3px; }
.winctl button { width: 27px; }
.winctl button + button { border-left: 1px solid #5a5a5a; }
.winctl .wide { width: 47px; }

/* toolbar */
.tools { background: #323232; border-left: 1px solid #252525; display: flex; flex-direction: column; align-items: center; }
.tools-head { align-self: stretch; display: flex; justify-content: flex-end; align-items: center; height: 29px; padding: 10px 5px 0 0; margin-left: 10px; border-bottom: 1px solid #252525; }
.tool-list { display: flex; flex-direction: column; gap: 2px; padding-top: 9px; }
.tool { width: 32px; height: 32px; border-radius: 4px; }
.tool > svg:not([width]) { width: 20px; height: 20px; }
.tool.active { background: #4a4a4a; }
.tool.dots { height: 28px; margin-top: 8px; }
.tool-list hr { width: 32px; height: 2px; margin: 2px 0; border: 0; background: #262626; }
.swatches { background: #3c3c3c; border-radius: 4px; margin-top: -4px; }

/* document area */
.work { display: flex; flex-direction: column; min-width: 0; padding-left: 1px; }
.doctabs { display: flex; height: 20px; background: #2e2e2e; border-bottom: 1px solid #252525; font-size: 12px; line-height: 18px; }
.doctab { display: flex; align-items: center; gap: 7px; padding: 0 9px; border-right: 1px solid #252525; color: #7a7a7a; }
.doctab.on { background: #323232; color: #fff; font-weight: bold; }
.editbar { display: flex; align-items: center; height: 34px; background: #323232; }
.clubbtn { margin: 0 13px 0 13px; width: 22px; height: 20px; }
.scene { gap: 28px; margin-left: 20px; font-size: 14px; }
.viewctl { display: flex; align-items: center; height: 24px; margin-left: auto; padding-right: 9px; }
.viewctl > button { width: 32px; }
.viewctl .stepper { display: flex; flex-direction: column; justify-content: space-between; width: 16px; height: 20px; margin-left: 6px; align-items: center; }
.up { transform: rotate(180deg); }
svg.thin { width: 9px; height: 5px; }
.zoomval { width: 66px; height: 24px; background: #252525; border: 1px solid #4a4a4a; text-align: center; padding-right: 6px; }
.viewctl .zoomdrop { width: 16px; }
.canvas { position: relative; flex: 1; overflow: hidden; }
.stage { position: absolute; left: 440px; top: 193px; width: 552px; height: 401px; background: #fff; border: 1px solid #000; }
.bitmap { position: absolute; left: 156px; top: 105px; width: 212px; height: 151px; padding: 0 7px 4px 0; background: #0fa8e6; border: 1px solid #1473ff; display: grid; place-items: center; }
.scroll-v { position: absolute; right: 7px; top: 221px; width: 4px; height: 321px; border-radius: 2px; background: #6e6e6e; }
.scroll-h { position: absolute; left: 202px; right: 213px; bottom: 9px; height: 4px; border-radius: 2px; background: #6e6e6e; }

/* panel tabs */
.tl-tabs { display: flex; align-items: center; height: 17px; padding-right: 6px; background: #2e2e2e; border-bottom: 1px solid #252525; }
.tl-tabs .burger { margin-left: auto; }
.ptab { height: 17px; padding: 0 7px; border-right: 1px solid #252525; color: #6e6e6e; font-size: 11px; line-height: 16px; }
.ptab.on { background: #323232; color: #fff; font-weight: bold; }

/* timeline */
.timeline { background: #323232; }
.tl-body { display: grid; grid-template-columns: 326px minmax(0, 1fr); }
.tl-left { border-right: 1px solid #252525; }
.tl-tools { display: flex; align-items: center; height: 49px; border-bottom: 1px solid #252525; }
.tl-tools button { width: 32px; height: 30px; }
.tl-left .tl-tools { padding: 0 12px; }
.tl-right .tl-tools { gap: 8px; padding-right: 19px; }
.bar2 { width: 2px; height: 32px; background: #464646; }
.tool.more::after { right: 1px; bottom: 1px; }
.clubbtn.more::after { right: 1px; bottom: 0; }
.layer-head { display: flex; align-items: center; height: 41px; padding: 0 16px 0 12px; border-bottom: 1px solid #252525; }
.layer-head button { width: 32px; height: 24px; }
.flags { display: flex; align-items: center; gap: 7px; }
.layer { display: flex; align-items: center; gap: 12px; height: 19px; padding: 0 73px 0 28px; background: #345f90; color: #fff; border-bottom: 1px solid #252525; font-size: 12px; }
.outline { width: 6px; height: 12px; margin-left: auto; background: #0ff; }
.blank { height: 14px; border-bottom: 1px solid #252525; }
.tl-right { position: relative; }
.fps { display: flex; align-items: flex-start; width: 316px; padding-left: 26px; color: #757575; font-size: 15px; line-height: 20px; }
.fps sup { font-size: 10px; line-height: 14px; }
.fps b { margin-left: 24px; color: #fff; }
.fps .unit { margin-left: 16px; color: #bdbdbd; }
.tlzoom { display: flex; align-items: center; gap: 10px; margin-left: auto; }
.tlzoom input { appearance: none; width: 90px; height: 16px; background: linear-gradient(90deg, #bdbdbd 33px, transparent 33px 51px, #4a4a4a 51px) center / 100% 2px no-repeat; }
.tlzoom input::-webkit-slider-thumb { appearance: none; width: 13px; height: 13px; border: 2px solid #bdbdbd; border-radius: 50%; background: #323232; }
.ruler { height: 41px; border-bottom: 1px solid #252525; font-size: 11px; color: #9a9a9a; }
.seconds { display: flex; height: 15px; padding-left: 415px; border-bottom: 1px solid #252525; line-height: 14px; background: repeating-linear-gradient(90deg, transparent 0 71px, #252525 71px 72px, transparent 72px 90px); }
.seconds i { flex: 0 0 432px; }
.nums { display: flex; height: 25px; padding: 6px 0 0 73px; line-height: 17px; overflow: hidden; background: repeating-linear-gradient(90deg, transparent 0 17px, #252525 17px 18px) 0 0 / 100% 8px no-repeat; }
.nums span { flex: 0 0 90px; }
.frames {
  height: 19px;
  margin-right: 17px;
  border-bottom: 1px solid #252525;
  background: repeating-linear-gradient(90deg, transparent 0 17px, #252525 17px 18px), repeating-linear-gradient(90deg, #2d2d2d 0 72px, #3a3a3a 72px 90px);
}
.key { display: block; width: 17px; height: 18px; background: radial-gradient(circle at 9px 11px, #27466e 3px, #6f92bd 4px); }
.hbar { width: 116px; height: 4px; margin: 6px 0 7px 1px; border-radius: 2px; background: #6e6e6e; }
.playhead { position: absolute; left: 2px; top: 49px; }

/* properties */
.props { background: #323232; border-right: 1px solid #252525; color: #b8b8b8; }
.collapse { display: flex; align-items: center; justify-content: flex-end; height: 12px; padding-right: 5px; border-bottom: 1px solid #252525; }
.ptab.lib { padding-right: 16px; }
.modes { display: flex; align-items: center; justify-content: center; height: 51px; border-bottom: 2px solid #262626; font-size: 14px; color: #f0f0f0; }
.modes button { width: 73px; height: 32px; border-radius: 4px; }
.modes button.on { background: #4a4a4a; }
.modes button:disabled { color: #6e6e6e; }
.inst { padding: 8px 20px 8px; border-bottom: 2px solid #262626; display: flex; flex-direction: column; gap: 5px; font-size: 15px; }
.inst-row { display: flex; align-items: center; gap: 10px; }
.box { width: 32px; height: 32px; background: #2c2c2c; border: 1px solid #484848; border-radius: 4px; color: #f0f0f0; }
.box.text { width: 57px; font-size: 14px; }
svg.pic:not([width]) { height: 12px; margin: 0 10px 0 8px; }
.kind { flex: 1; color: #8a8a8a; font-size: 14px; }
.lbl { width: 34px; font-size: 12px; color: #8a8a8a; }
.name { flex: 1; font-size: 14px; }
.conv { padding: 8px 20px; border-bottom: 2px solid #262626; }
.conv .box { display: flex; }
.size { padding: 9px 20px 16px; border-bottom: 2px solid #262626; }
.size h2 { display: flex; align-items: center; gap: 12px; margin: 0; font-size: 15px; line-height: 20px; }
.dims { display: grid; grid-template-columns: 35px 57px 21px 29px 57px; row-gap: 16px; margin-top: 19px; color: #8a8a8a; }
.dims input { width: 57px; height: 32px; border-bottom: 1px solid #4f4f4f; color: #e0e0e0; font-size: 14px; }
.dims label { line-height: 32px; font-size: 12px; }
.link { position: relative; grid-row: span 2; padding: 17px 0 0 1px; }
.link .ul:not([width]) { position: absolute; left: 7px; top: 33px; width: 10px; height: 14px; color: #858585; }

/* floating transform panel */
.floatbar { position: absolute; left: 0; top: 0; width: 39px; height: 55px; padding-bottom: 10px; background: #323232; border: 1px solid #222; border-radius: 4px 4px 0 0; box-shadow: 1px 1px 3px rgba(0, 0, 0, .5); display: flex; flex-direction: column; align-items: center; }
.fhead { display: flex; justify-content: space-between; align-items: center; width: 37px; height: 13px; padding: 2px 5px 0 8px; border-bottom: 1px solid #252525; }
.thick { stroke-width: 3; }
.grip { width: 20px; height: 4px; margin: 3px 0 8px; background: repeating-linear-gradient(90deg, #222 0 1px, transparent 1px 2px); }

/* dialog */
.dialog { position: absolute; left: 874px; top: 86px; width: 571px; background: #323232; box-shadow: 0 3px 14px rgba(0, 0, 0, .6); color: #e0e0e0; }
.dtitle { display: flex; align-items: center; justify-content: space-between; height: 30px; padding: 0 9px 0 8px; background: #fff; color: #000; font-size: 12px; }
.dbody { padding: 15px 10px 30px 0; }
.form-top { display: flex; justify-content: space-between; }
.rows { display: flex; flex-direction: column; gap: 10px; }
.row { display: flex; height: 32px; }
.row > label { width: 145px; margin-right: 8px; text-align: right; color: #b0b0b0; }
.row > label[for] { padding-top: 1px; }
.row.short { height: 20px; line-height: 18px; }
.tx { width: 273px; background: #252525; border: 1px solid #454545; border-radius: 4px; padding: 0 12px; font-size: 14px; }
.sel { display: flex; align-items: center; width: 111px; border: 2px solid #2680eb; border-radius: 4px; background: #252525; padding-right: 11px; }
.sel select { appearance: none; flex: 1; padding-left: 11px; font-size: 15px; outline: 0; }
.al { margin: 5px 17px 0 12px; font-size: 14px; color: #b0b0b0; }
svg.reg:not([width]) { width: 22px; height: 22px; margin-top: 5px; }
.root { padding-left: 2px; font-size: 15px; color: #4b9cf5; }
.dbtns { display: flex; flex-direction: column; gap: 10px; }
.dbtns button { width: 93px; height: 32px; border: 2px solid #e6e6e6; border-radius: 16px; font-size: 14px; }
.dbtns .ok { background: #e4e4e4; color: #222; }
.adv { display: flex; align-items: center; gap: 5px; margin: 14px 0 0 9px; font-size: 14px; }
.ck { display: flex; align-items: center; gap: 11px; height: 22px; margin-left: 135px; font-size: 15px; }
.ck.nine { margin: 27px 0 11px 20px; }
.ck input { appearance: none; width: 14px; height: 14px; border: 2px solid #909090; border-radius: 3px; }
.off { color: #6e6e6e; }
.off input { border-color: #5c5c5c; }
.latin { font-size: 13px; }
fieldset { width: 428px; min-width: 0; margin: 0 0 10px 20px; padding: 10px 0 10px; border: 1px solid #4a4a4a; border-radius: 4px; }
fieldset > * + * + * { margin-top: 12px; }
legend { margin-left: 5px; padding: 0 5px; font-size: 15px; line-height: 20px; color: #b8b8b8; }
.fr { display: flex; height: 30px; }
.fr label { width: 124px; margin-right: 9px; text-align: right; color: #6e6e6e; font-size: 12px; }
.fr svg { margin: 4px 0 0 16px; color: #4f4f4f; }
.fr svg + svg { margin-left: 19px; }
.dis { width: 208px; background: #3c3c3c; border-radius: 4px; }
.dis.long { width: 271px; }
.author { padding: 10px 0 14px; margin-bottom: 0; }
.auth { display: flex; gap: 12px; padding-left: 9px; }
.col { display: flex; flex-direction: column; gap: 10px; }
.col button { width: 111px; height: 32px; background: #3c3c3c; border-radius: 4px; color: #6e6e6e; font-size: 14px; }
.info { display: flex; flex-direction: column; gap: 15px; color: #c8c8c8; font-size: 14px; padding-left: 2px; }
.info .ck { margin-left: -2px; }

/* annotation and overlays */
.arrow { position: absolute; fill: none; filter: drop-shadow(2px 3px 2px rgba(0, 0, 0, .6)); }
.a1 { left: 807px; top: 182px; }
.a2 { left: 1264px; top: 158px; }
.cursor { position: absolute; left: 1416px; top: 144px; }
.ime { position: absolute; left: 1332px; top: 943px; }
.mark { position: absolute; right: 6px; bottom: 8px; display: flex; align-items: center; font-family: "Liberation Sans", "Noto Sans CJK SC", sans-serif; }
.m1 { font-size: 21px; line-height: 24px; font-weight: 500; color: #1f4f87; }
.m2 { font-size: 18px; line-height: 18px; color: #1f7038; }
```
